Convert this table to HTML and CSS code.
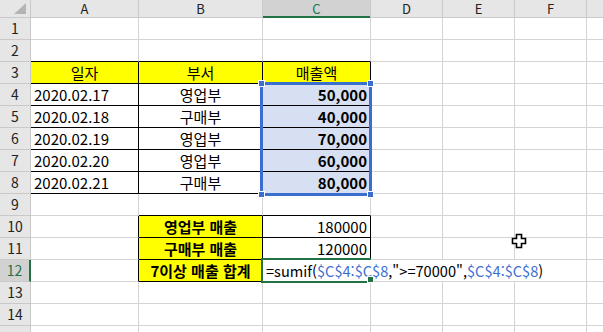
FILE: index.html
```html
<!DOCTYPE html>
<html lang="ko">
<head>
<meta charset="utf-8">
<link rel="stylesheet" href="styles.css">
</head>
<body>
<div class="sheet">
  <div class="grid">
    <div class="corner"><svg width="30" height="17" viewBox="0 0 30 17"><polygon points="26,3 26,14 14,14" fill="#b4b4b4"/></svg></div>
    <div class="ch">A</div><div class="ch">B</div><div class="ch sel">C</div><div class="ch">D</div><div class="ch">E</div><div class="ch">F</div><div class="ch"></div>

    <div class="rh">1</div><div class="c"></div><div class="c"></div><div class="c"></div><div class="c"></div><div class="c"></div><div class="c"></div><div class="c"></div>
    <div class="rh">2</div><div class="c bb"></div><div class="c bb"></div><div class="c bb"></div><div class="c"></div><div class="c"></div><div class="c"></div><div class="c"></div>

    <div class="rh">3</div><div class="c ctr y br bb">일자</div><div class="c ctr y br bb">부서</div><div class="c ctr y br bb">매출액</div><div class="c"></div><div class="c"></div><div class="c"></div><div class="c"></div>

    <div class="rh">4</div><div class="c br bb">2020.02.17</div><div class="c ctr br bb">영업부</div><div class="c num b sl br bb">50,000</div><div class="c"></div><div class="c"></div><div class="c"></div><div class="c"></div>
    <div class="rh">5</div><div class="c br bb">2020.02.18</div><div class="c ctr br bb">구매부</div><div class="c num b sl br bb">40,000</div><div class="c"></div><div class="c"></div><div class="c"></div><div class="c"></div>
    <div class="rh">6</div><div class="c br bb">2020.02.19</div><div class="c ctr br bb">영업부</div><div class="c num b sl br bb">70,000</div><div class="c"></div><div class="c"></div><div class="c"></div><div class="c"></div>
    <div class="rh">7</div><div class="c br bb">2020.02.20</div><div class="c ctr br bb">영업부</div><div class="c num b sl br bb">60,000</div><div class="c"></div><div class="c"></div><div class="c"></div><div class="c"></div>
    <div class="rh">8</div><div class="c br bb">2020.02.21</div><div class="c ctr br bb">구매부</div><div class="c num b sl br bb">80,000</div><div class="c"></div><div class="c"></div><div class="c"></div><div class="c"></div>

    <div class="rh">9</div><div class="c"></div><div class="c bb"></div><div class="c bb"></div><div class="c"></div><div class="c"></div><div class="c"></div><div class="c"></div>

    <div class="rh">10</div><div class="c br"></div><div class="c ctr y b br bb">영업부 매출</div><div class="c num br bb">180000</div><div class="c"></div><div class="c"></div><div class="c"></div><div class="c"></div>
    <div class="rh">11</div><div class="c br"></div><div class="c ctr y b br bb">구매부 매출</div><div class="c num br bb">120000</div><div class="c"></div><div class="c"></div><div class="c"></div><div class="c"></div>
    <div class="rh act">12</div><div class="c br"></div><div class="c ctr y b br bb">7이상 매출 합계</div><div class="c edit">=sumif(<span class="ref">$C$4:$C$8</span>,"&gt;=70000",<span class="ref">$C$4:$C$8</span>)</div><div class="c"></div>

    <div class="rh">13</div><div class="c"></div><div class="c"></div><div class="c"></div><div class="c"></div><div class="c"></div><div class="c"></div><div class="c"></div>
    <div class="rh">14</div><div class="c"></div><div class="c"></div><div class="c"></div><div class="c"></div><div class="c"></div><div class="c"></div><div class="c"></div>
    <div class="rh"></div><div class="c"></div><div class="c"></div><div class="c"></div><div class="c"></div><div class="c"></div><div class="c"></div><div class="c"></div>
  </div>

  <div class="selbox">
    <span class="h tl"></span><span class="h tr"></span><span class="h bl"></span><span class="h brh"></span>
  </div>
  <div class="editbox"><span class="fh"></span></div>
  <svg class="cursor" width="17" height="17" viewBox="0 0 17 17">
    <path d="M5.5 1.5h5v4h4v5h-4v4h-5v-4h-4v-5h4z" fill="#fff" stroke="#000" stroke-width="1.6" stroke-linejoin="miter"/>
  </svg>
</div>
</body>
</html>
```

FILE: styles.css
```css
html, body {
  margin: 0;
  padding: 0;
  background: #fff;
  overflow: hidden;
}

.sheet {
  position: relative;
  width: 603px;
  height: 332px;
  overflow: hidden;
  font-family: "Noto Sans CJK KR", "Noto Sans", sans-serif;
  font-size: 15px;
  color: #000;
}

.grid {
  display: grid;
  grid-template-columns: 31px 108px 124px 108px 72px 72px 72px 17px;
  grid-template-rows: 18px repeat(15, 22px);
}

.grid > div {
  box-sizing: border-box;
  min-width: 0;
}

.corner {
  background: #e6e6e6;
  border-right: 1px solid #c9c9c9;
  border-bottom: 1px solid #c9c9c9;
}
.corner svg { display: block; }

.ch {
  background: #e6e6e6;
  border-right: 1px solid #c9c9c9;
  border-bottom: 1px solid #c9c9c9;
  text-align: center;
  font-size: 13px;
  line-height: 17px;
  color: #222;
}
.ch.sel {
  background: #d2d2d2;
  color: #217346;
  border-bottom: 0;
  line-height: 18px;
  padding-bottom: 1px;
  box-shadow: inset 0 -2px 0 #217346;
}

.rh {
  background: #e6e6e6;
  border-right: 1px solid #c9c9c9;
  border-bottom: 1px solid #c9c9c9;
  text-align: center;
  font-size: 14px;
  line-height: 21px;
  color: #222;
}
.rh.act {
  background: #d2d2d2;
  color: #217346;
  border-right: 2px solid #217346;
}

.c {
  border-right: 1px solid #d4d4d4;
  border-bottom: 1px solid #d4d4d4;
  line-height: 21px;
  padding: 0 3px;
  white-space: nowrap;
}
.ctr { text-align: center; }
.num { text-align: right; }
.b { font-weight: bold; }
.y { background: #ffff00; }
.sl { background: #d6e0f2; }
.br { border-right-color: #000; }
.bb { border-bottom-color: #000; }

.edit {
  grid-column: span 4;
  overflow: visible;
  font-size: 14.6px;
}
.ref { color: #3b6fd2; }

.selbox {
  position: absolute;
  left: 260px;
  top: 82px;
  width: 112px;
  height: 114px;
  box-sizing: border-box;
  border: 3px solid #3a6fd0;
}
.h {
  position: absolute;
  width: 5px;
  height: 5px;
  background: #3a6fd0;
  border: 1px solid #fff;
}
.h.tl { left: -5px; top: -5px; }
.h.tr { right: -5px; top: -5px; }
.h.bl { left: -5px; bottom: -5px; }
.h.brh { right: -5px; bottom: -5px; }

.editbox {
  position: absolute;
  left: 261px;
  top: 258px;
  width: 110px;
  height: 25px;
  box-sizing: border-box;
  border: 2px solid #217346;
  border-right: 0;
}
.fh {
  position: absolute;
  right: -3px;
  bottom: -2px;
  width: 5px;
  height: 5px;
  background: #217346;
  border: 1px solid #fff;
}

.cursor {
  position: absolute;
  left: 511px;
  top: 233px;
}
```
